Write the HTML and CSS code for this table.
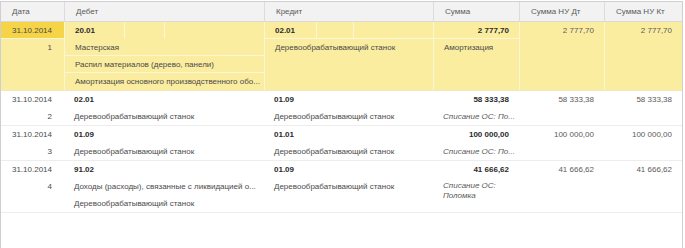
FILE: index.html
```html
<!DOCTYPE html>
<html lang="ru">
<head>
<meta charset="utf-8">
<link rel="stylesheet" href="styles.css">
</head>
<body>
<div class="grid">
  <div class="row head">
    <div class="cell">Дата</div>
    <div class="cell">Дебет</div>
    <div class="cell">Кредит</div>
    <div class="cell">Сумма</div>
    <div class="cell">Сумма НУ Дт</div>
    <div class="cell">Сумма НУ Кт</div>
  </div>

  <div class="row sel">
    <div class="col c-date">
      <div class="ln cur r">31.10.2014</div>
      <div class="ln r">1</div>
    </div>
    <div class="col">
      <div class="ln b sub"><span class="s1">20.01</span><span class="s2"></span><span class="s3"></span></div>
      <div class="ln bl">Мастерская</div>
      <div class="ln bl">Распил материалов (дерево, панели)</div>
      <div class="ln">Амортизация основного производственного обо...</div>
    </div>
    <div class="col">
      <div class="ln b sub bl"><span class="s1k">02.01</span><span class="s2k"></span><span class="s3"></span></div>
      <div class="ln">Деревообрабатывающий станок</div>
    </div>
    <div class="col">
      <div class="ln b r bl">2 777,70</div>
      <div class="ln">Амортизация</div>
    </div>
    <div class="col"><div class="ln r g">2 777,70</div></div>
    <div class="col"><div class="ln r g">2 777,70</div></div>
  </div>

  <div class="row">
    <div class="col c-date">
      <div class="ln r">31.10.2014</div>
      <div class="ln r">2</div>
    </div>
    <div class="col">
      <div class="ln b">02.01</div>
      <div class="ln">Деревообрабатывающий станок</div>
    </div>
    <div class="col">
      <div class="ln b">01.09</div>
      <div class="ln">Деревообрабатывающий станок</div>
    </div>
    <div class="col">
      <div class="ln b r">58 333,38</div>
      <div class="ln i">Списание ОС: По...</div>
    </div>
    <div class="col"><div class="ln r g">58 333,38</div></div>
    <div class="col"><div class="ln r g">58 333,38</div></div>
  </div>

  <div class="row">
    <div class="col c-date">
      <div class="ln r">31.10.2014</div>
      <div class="ln r">3</div>
    </div>
    <div class="col">
      <div class="ln b">01.09</div>
      <div class="ln">Деревообрабатывающий станок</div>
    </div>
    <div class="col">
      <div class="ln b">01.01</div>
      <div class="ln">Деревообрабатывающий станок</div>
    </div>
    <div class="col">
      <div class="ln b r">100 000,00</div>
      <div class="ln i">Списание ОС: По...</div>
    </div>
    <div class="col"><div class="ln r g">100 000,00</div></div>
    <div class="col"><div class="ln r g">100 000,00</div></div>
  </div>

  <div class="row">
    <div class="col c-date">
      <div class="ln r">31.10.2014</div>
      <div class="ln r">4</div>
    </div>
    <div class="col">
      <div class="ln b">91.02</div>
      <div class="ln">Доходы (расходы), связанные с ликвидацией о...</div>
      <div class="ln">Деревообрабатывающий станок</div>
    </div>
    <div class="col">
      <div class="ln b">01.09</div>
      <div class="ln">Деревообрабатывающий станок</div>
    </div>
    <div class="col">
      <div class="ln b r">41 666,62</div>
      <div class="ln2 i">Списание ОС:<br>Поломка</div>
    </div>
    <div class="col"><div class="ln r g">41 666,62</div></div>
    <div class="col"><div class="ln r g">41 666,62</div></div>
  </div>
</div>
</body>
</html>
```

FILE: styles.css
```css
html, body {
  margin: 0;
  padding: 0;
  background: #ffffff;
}
body {
  font-family: "Liberation Sans", Arial, sans-serif;
  font-size: 8px;
  color: #4a4a4a;
}
.grid {
  width: 681px;
  height: 246px;
  border: 1px solid #cfcfcf;
  border-bottom: none;
  margin-top: 1px;
  overflow: hidden;
}
.row {
  display: grid;
  grid-template-columns: 63px 200px 169px 86px 85px 78px;
  border-bottom: 1px solid #ededed;
}
.head {
  background: #f2f2f2;
  border-bottom: 1px solid #d9d9d9;
  height: 19px;
  color: #5a5a5a;
}
.head .cell {
  line-height: 19px;
  padding-left: 11px;
  border-left: 1px solid #dcdcdc;
  white-space: nowrap;
}
.head .cell:first-child { border-left: none; }
.col {
  display: flex;
  flex-direction: column;
  min-width: 0;
}
.ln {
  height: 17px;
  line-height: 17px;
  padding: 0 10px;
  white-space: nowrap;
  overflow: hidden;
}
.ln2 {
  padding: 3px 10px 0;
  line-height: 10px;
}
.r { text-align: right; }
.b { font-weight: bold; color: #2a2a2a; }
.g { color: #5a5a5a; }
.i { font-style: italic; color: #5a5a5a; }
.c-date .ln { padding: 0 12px 0 10px; }

.sel { background: #fbeda0; border-bottom-color: #f0e6c0; }
.sel .col { border-left: 1px solid #fdf6d2; }
.sel .col:first-child { border-left: none; }
.sel .bl { border-bottom: 1px solid #fdf6d2; height: 16px; }
.sel .c-date .cur { background: #f6d447; border-bottom: 1px solid #fdf6d2; height: 16px; }
.sub { display: flex; padding: 0; }
.sub span { border-right: 1px solid #fdf6d2; }
.s1 { width: 49px; padding-left: 10px; }
.s1k { width: 41px; padding-left: 10px; }
.s2 { width: 39px; }
.s2k { width: 36px; }
.s3 { border-right: none !important; }
```
